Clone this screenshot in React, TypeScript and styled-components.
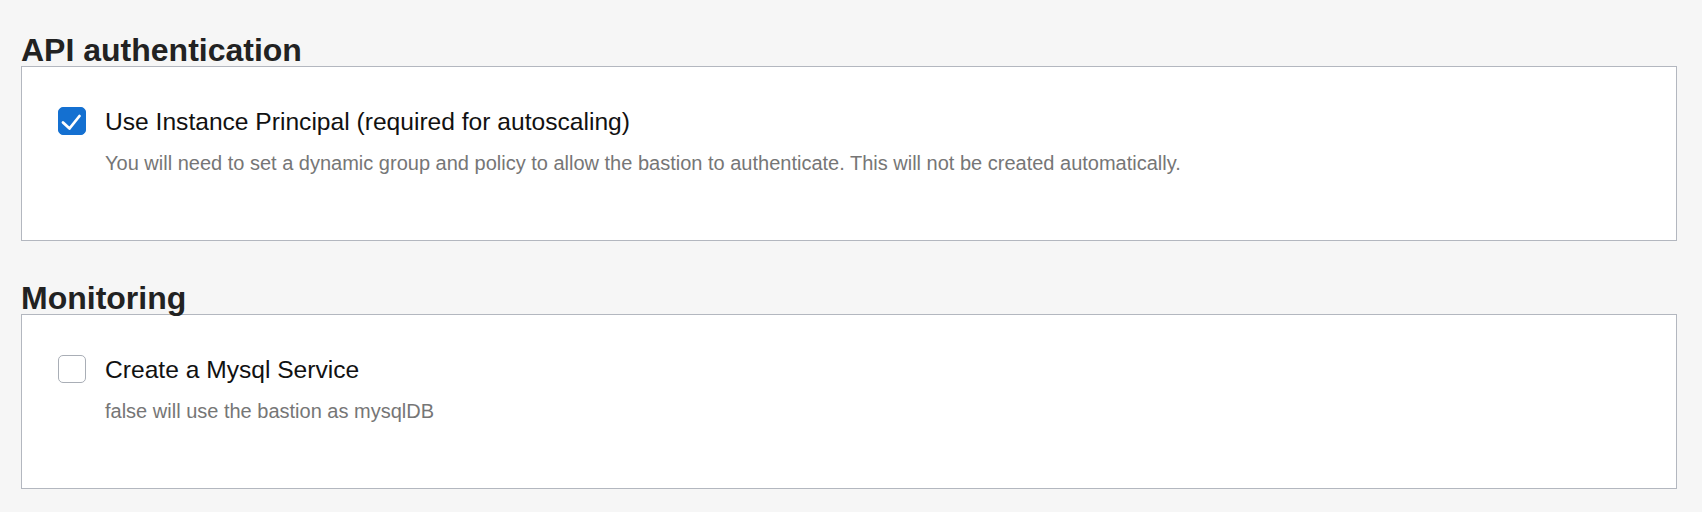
import { createGlobalStyle } from "styled-components"
import styled from "styled-components"

const GlobalStyle = createGlobalStyle`
  html, body {
    margin: 0;
    padding: 0;
    background: #f6f6f6;
    font-family: "Liberation Sans", Arial, Helvetica, sans-serif;
  }
`

interface SectionData {
  title: string
  label: string
  hint: string
  checked: boolean
}

const sections: SectionData[] = [
  {
    title: "API authentication",
    label: "Use Instance Principal (required for autoscaling)",
    hint: "You will need to set a dynamic group and policy to allow the bastion to authenticate. This will not be created automatically.",
    checked: true,
  },
  {
    title: "Monitoring",
    label: "Create a Mysql Service",
    hint: "false will use the bastion as mysqlDB",
    checked: false,
  },
]

const Page = styled.div`
  display: flex;
  flex-direction: column;
  gap: 42px;
  padding: 35px 25px 22px 21px;
`

const Section = styled.section`
  display: flex;
  flex-direction: column;
`

const SectionTitle = styled.h2`
  margin: 0;
  font-size: 32px;
  line-height: 31px;
  font-weight: 700;
  color: #222222;
  position: relative;
  z-index: 1;
`

const Card = styled.div`
  box-sizing: border-box;
  height: 175px;
  background: #ffffff;
  border: 1px solid #b3b7bf;
  padding: 40px 35px 0 36px;
`

const Row = styled.label`
  display: flex;
  align-items: flex-start;
  gap: 19px;
  cursor: pointer;
`

const Box = styled.span<{ $checked: boolean }>`
  box-sizing: border-box;
  width: 28px;
  height: 28px;
  flex: none;
  border-radius: 5px;
  display: flex;
  align-items: center;
  justify-content: center;
  background: ${(p) => (p.$checked ? "#1470d1" : "#ffffff")};
  border: 1px solid ${(p) => (p.$checked ? "#1470d1" : "#a9aeb6")};
`

const Label = styled.span`
  font-size: 24.6px;
  line-height: 30px;
  color: #111111;
`

const Hint = styled.div`
  margin: 14px 0 0 47px;
  font-size: 20px;
  line-height: 24px;
  color: #767676;
`

const Check = () => (
  <svg width="26" height="26" viewBox="0 0 26 26" fill="none">
    <path d="M4 14.5 L10.5 20.5 L20.5 8" stroke="#ffffff" strokeWidth="2.8" strokeLinecap="round" strokeLinejoin="round" />
  </svg>
)

const SettingSection = ({ title, label, hint, checked }: SectionData) => (
  <Section>
    <SectionTitle>{title}</SectionTitle>
    <Card>
      <Row>
        <Box $checked={checked}>{checked && <Check />}</Box>
        <Label>{label}</Label>
      </Row>
      <Hint>{hint}</Hint>
    </Card>
  </Section>
)

export default function App() {
  return (
    <>
      <GlobalStyle />
      <Page>
        {sections.map((s) => (
          <SettingSection key={s.title} {...s} />
        ))}
      </Page>
    </>
  )
}
